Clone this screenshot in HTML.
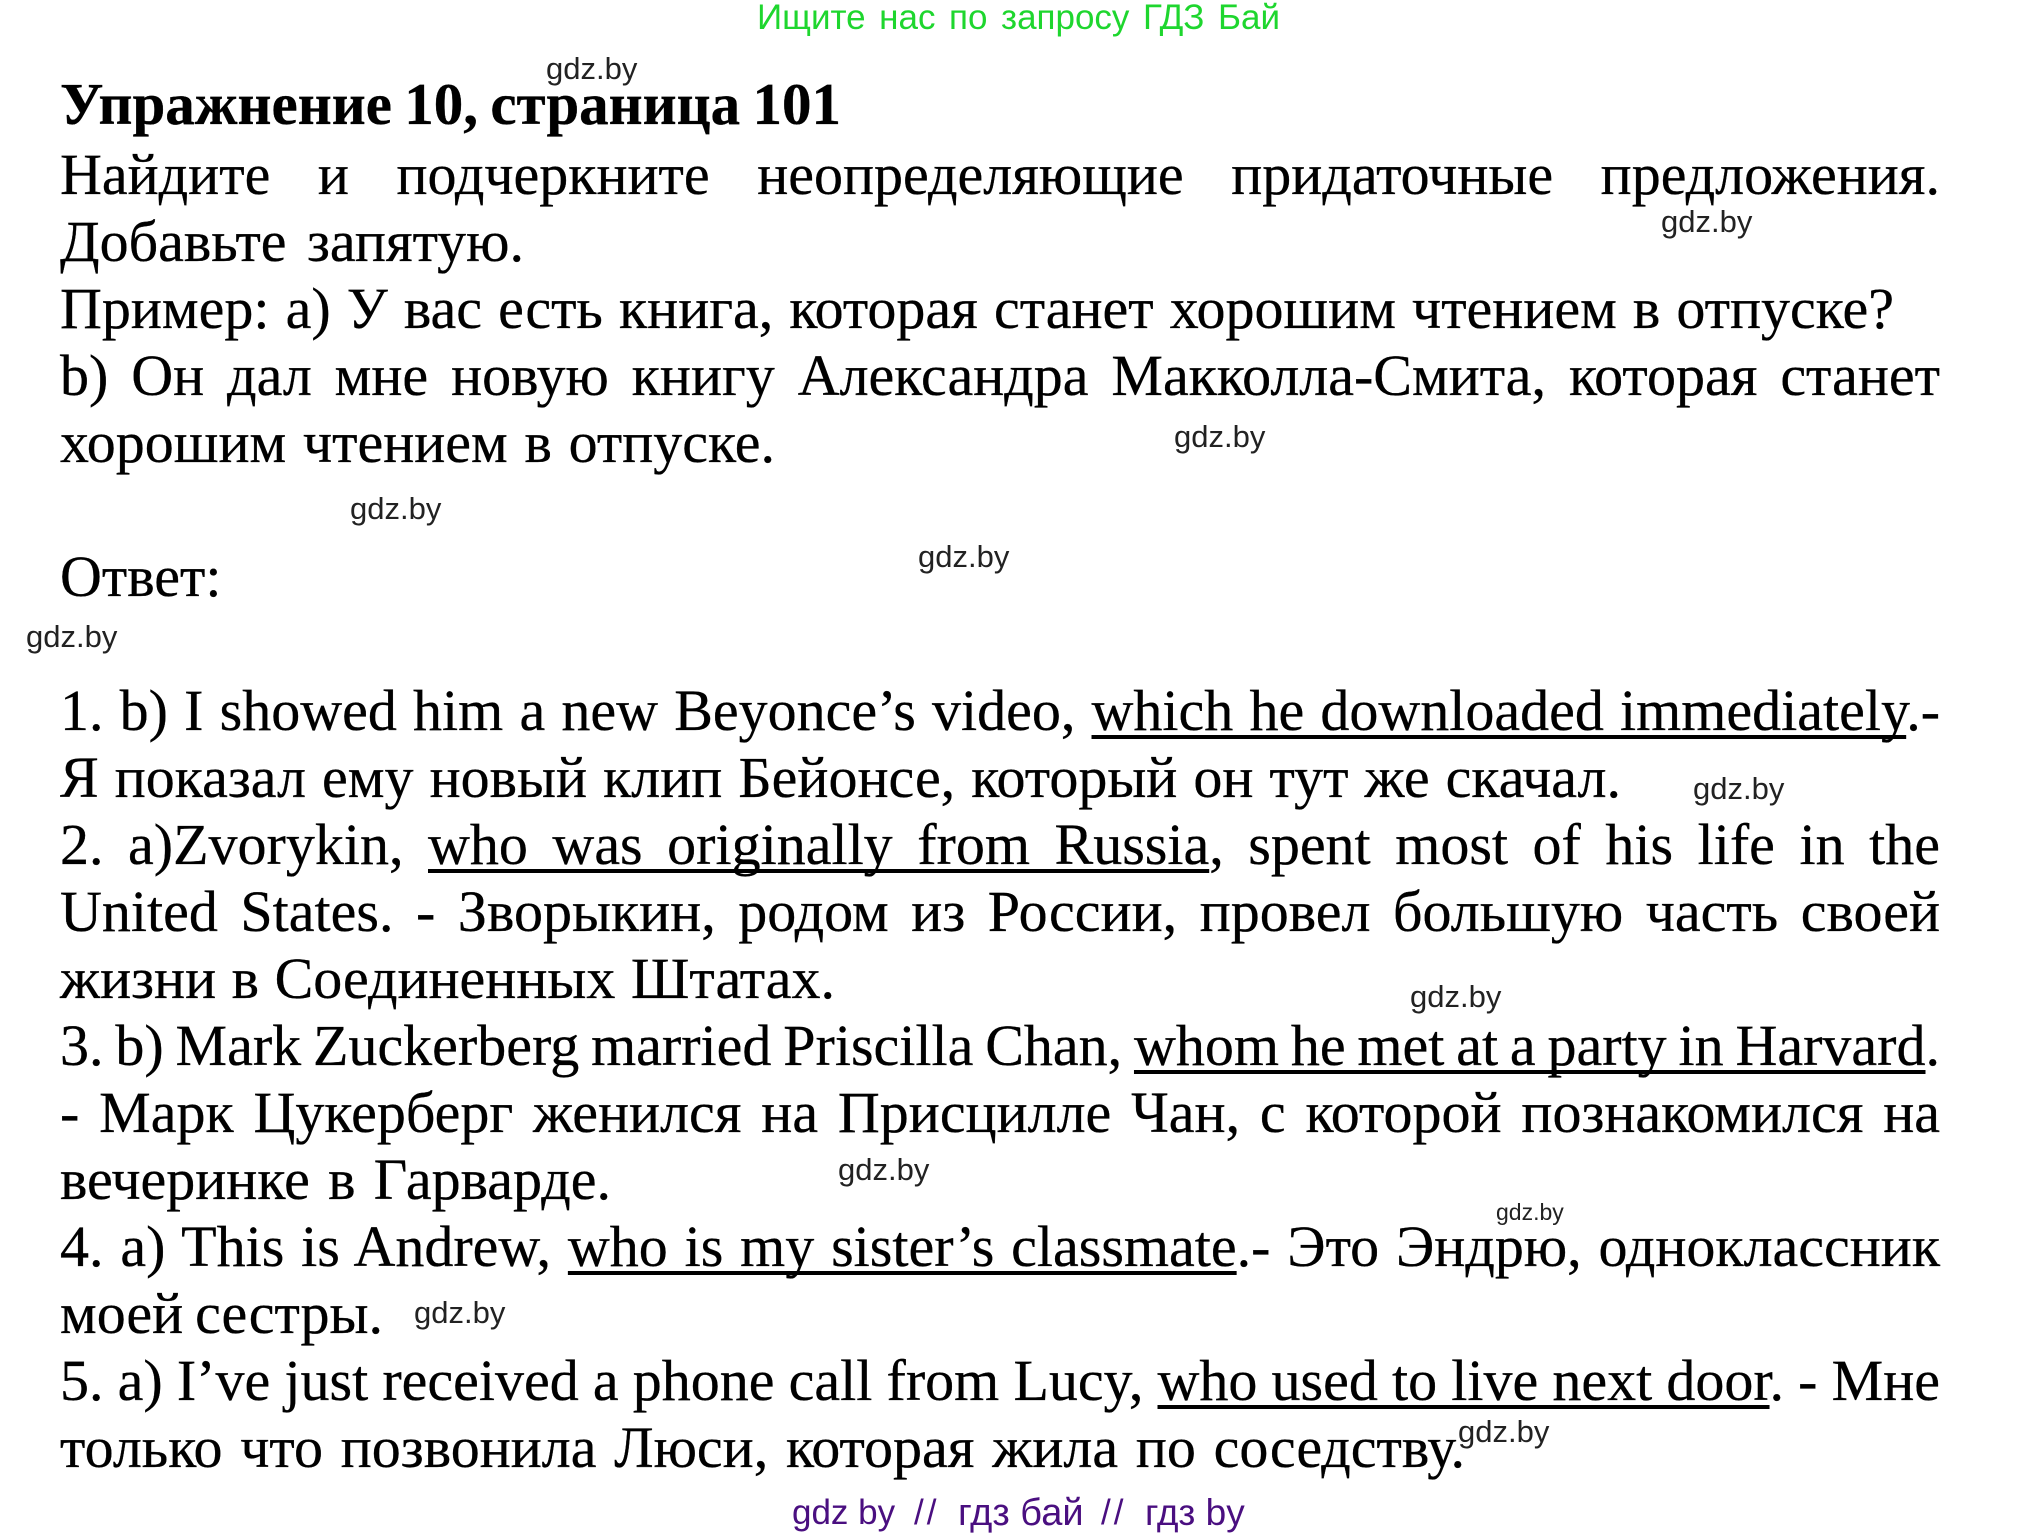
<!DOCTYPE html>
<html lang="ru">
<head>
<meta charset="utf-8">
<title>Упражнение 10, страница 101</title>
<style>
html,body{margin:0;padding:0;background:#fff;}
#p{position:relative;width:2038px;height:1535px;overflow:hidden;background:#fff;}
.l{position:absolute;left:60px;font-family:"Liberation Serif","Noto Serif CJK SC",serif;font-size:58px;line-height:67px;color:#000;white-space:nowrap;word-spacing:-8px;text-align:justify;text-align-last:justify;-webkit-text-stroke:0.3px #000;}
.j{width:1880px;}
.h{font-weight:bold;font-size:59px;}
.l u{text-decoration:underline;text-decoration-thickness:4px;text-underline-offset:5px;text-decoration-skip-ink:none;}
.g{position:absolute;font-family:"Liberation Sans",sans-serif;font-size:31px;line-height:30px;color:#222;white-space:nowrap;}
.s{font-size:23px;}
.top{position:absolute;left:757px;width:523px;top:-6px;font-family:"Liberation Sans",sans-serif;font-size:35px;line-height:48px;color:#1ed62e;white-space:nowrap;word-spacing:-4px;text-align:justify;text-align-last:justify;}
.b{position:absolute;top:1491px;font-family:"Liberation Sans",sans-serif;font-size:35px;line-height:44px;color:#4a0f80;white-space:nowrap;}
.c{font-size:38px;}
.d{letter-spacing:3px;}
</style>
</head>
<body>
<div id="p">
<div class="top">Ищите нас по запросу ГДЗ Бай</div>

<div class="l h" style="top:71px;width:781px">Упражнение 10, страница 101</div>
<div class="l j" style="top:141px">Найдите и подчеркните неопределяющие придаточные предложения.</div>
<div class="l" style="top:208px;width:464px">Добавьте запятую.</div>
<div class="l" style="top:275px;width:1834px">Пример: а) У вас есть книга, которая станет хорошим чтением в отпуске?</div>
<div class="l j" style="top:342px">b) Он дал мне новую книгу Александра Макколла-Смита, которая станет</div>
<div class="l" style="top:409px;width:715px">хорошим чтением в отпуске.</div>
<div class="l" style="top:543px;width:165px">Ответ:</div>
<div class="l j" style="top:677px">1. b) I showed him a new Beyonce’s video, <u>which he downloaded immediately</u>.-</div>
<div class="l" style="top:744px;width:1561px">Я показал ему новый клип Бейонсе, который он тут же скачал.</div>
<div class="l j" style="top:811px">2. a)Zvorykin, <u>who was originally from Russia</u>, spent most of his life in the</div>
<div class="l j" style="top:878px">United States. - Зворыкин, родом из России, провел большую часть своей</div>
<div class="l" style="top:945px;width:775px">жизни в Соединенных Штатах.</div>
<div class="l j" style="top:1012px">3. b) Mark Zuckerberg married Priscilla Chan, <u>whom he met at a party in Harvard</u>.</div>
<div class="l j" style="top:1079px">- Марк Цукерберг женился на Присцилле Чан, с которой познакомился на</div>
<div class="l" style="top:1146px;width:551px">вечеринке в Гарварде.</div>
<div class="l j" style="top:1213px">4. a) This is Andrew, <u>who is my sister’s classmate</u>.- Это Эндрю, одноклассник</div>
<div class="l" style="top:1280px;width:323px">моей сестры.</div>
<div class="l j" style="top:1347px">5. a) I’ve just received a phone call from Lucy, <u>who used to live next door</u>. - Мне</div>
<div class="l" style="top:1414px;width:1405px">только что позвонила Люси, которая жила по соседству.</div>

<div class="g" style="left:546px;top:54px">gdz.by</div>
<div class="g" style="left:1661px;top:207px">gdz.by</div>
<div class="g" style="left:1174px;top:422px">gdz.by</div>
<div class="g" style="left:350px;top:494px">gdz.by</div>
<div class="g" style="left:918px;top:542px">gdz.by</div>
<div class="g" style="left:26px;top:622px">gdz.by</div>
<div class="g" style="left:1693px;top:774px">gdz.by</div>
<div class="g" style="left:1410px;top:982px">gdz.by</div>
<div class="g" style="left:838px;top:1155px">gdz.by</div>
<div class="g s" style="left:1496px;top:1197px">gdz.by</div>
<div class="g" style="left:414px;top:1298px">gdz.by</div>
<div class="g" style="left:1458px;top:1417px">gdz.by</div>

<div class="b" style="left:792px">gdz by</div>
<div class="b d" style="left:914px">//</div>
<div class="b c" style="left:958px">гдз бай</div>
<div class="b d" style="left:1101px">//</div>
<div class="b c" style="left:1145px;font-size:37px">гдз by</div>
</div>
</body>
</html>
